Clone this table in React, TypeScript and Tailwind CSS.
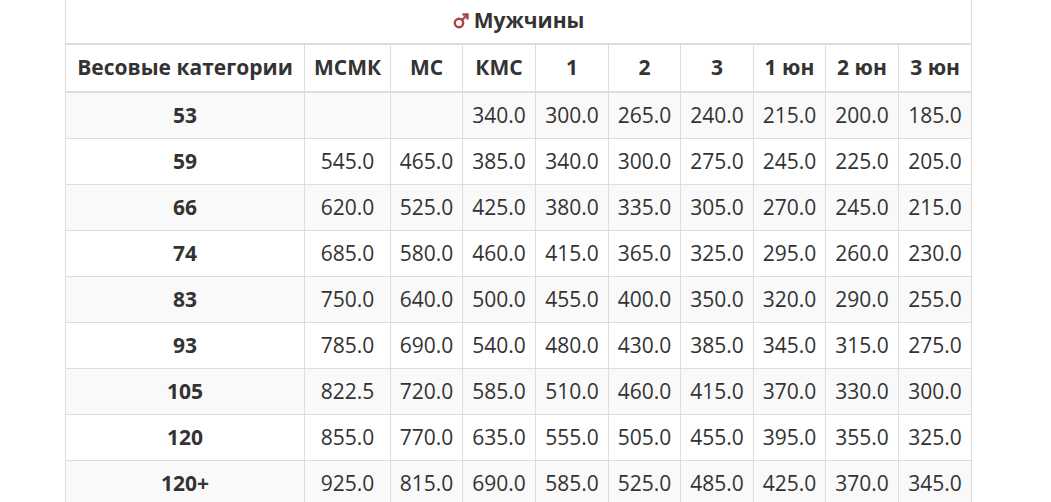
import React from "react";

const headers = ["Весовые категории", "МСМК", "МС", "КМС", "1", "2", "3", "1 юн", "2 юн", "3 юн"];
const widths = [239, 86, 72, 73, 73, 72, 73, 72, 73, 73];

const rows: [string, string[]][] = [
  ["53", ["", "", "340.0", "300.0", "265.0", "240.0", "215.0", "200.0", "185.0"]],
  ["59", ["545.0", "465.0", "385.0", "340.0", "300.0", "275.0", "245.0", "225.0", "205.0"]],
  ["66", ["620.0", "525.0", "425.0", "380.0", "335.0", "305.0", "270.0", "245.0", "215.0"]],
  ["74", ["685.0", "580.0", "460.0", "415.0", "365.0", "325.0", "295.0", "260.0", "230.0"]],
  ["83", ["750.0", "640.0", "500.0", "455.0", "400.0", "350.0", "320.0", "290.0", "255.0"]],
  ["93", ["785.0", "690.0", "540.0", "480.0", "430.0", "385.0", "345.0", "315.0", "275.0"]],
  ["105", ["822.5", "720.0", "585.0", "510.0", "460.0", "415.0", "370.0", "330.0", "300.0"]],
  ["120", ["855.0", "770.0", "635.0", "555.0", "505.0", "455.0", "395.0", "355.0", "325.0"]],
  ["120+", ["925.0", "815.0", "690.0", "585.0", "525.0", "485.0", "425.0", "370.0", "345.0"]],
];

function MarsIcon() {
  return (
    <svg width="16" height="16" viewBox="0 0 16 16" className="inline-block align-[-1px] mr-[5px]">
      <circle cx="6" cy="10" r="4.2" fill="none" stroke="#a94442" strokeWidth="2.4" />
      <path d="M9 7 L14 2" stroke="#a94442" strokeWidth="2.4" strokeLinecap="round" />
      <path d="M9.5 1.5 H14.5 V6.5" fill="none" stroke="#a94442" strokeWidth="2.4" strokeLinejoin="miter" />
    </svg>
  );
}

export default function App() {
  return (
    <div className="bg-white h-[502px] overflow-hidden" style={{ fontFamily: '"Open Sans", sans-serif' }}>
      <table className="ml-[65px] mt-[-3px] w-[907px] table-fixed border-collapse text-[21px] leading-[29px] text-[#333]">
        <colgroup>
          {widths.map((w, i) => (
            <col key={i} style={{ width: w }} />
          ))}
        </colgroup>
        <thead>
          <tr>
            <th colSpan={10} className="border border-[#ddd] border-b-2 p-2 text-center font-bold">
              <MarsIcon />
              Мужчины
            </th>
          </tr>
          <tr>
            {headers.map((h) => (
              <th key={h} className="border border-[#ddd] border-b-2 px-2 pt-2 pb-[9px] text-center font-bold whitespace-nowrap">
                {h}
              </th>
            ))}
          </tr>
        </thead>
        <tbody>
          {rows.map(([cat, vals], i) => (
            <tr key={cat} className={i % 2 === 0 ? "bg-[#f9f9f9]" : "bg-white"}>
              <td className="border border-[#ddd] p-2 text-center font-bold">{cat}</td>
              {vals.map((v, j) => (
                <td key={j} className="border border-[#ddd] p-2 text-center">
                  {v}
                </td>
              ))}
            </tr>
          ))}
        </tbody>
      </table>
    </div>
  );
}
